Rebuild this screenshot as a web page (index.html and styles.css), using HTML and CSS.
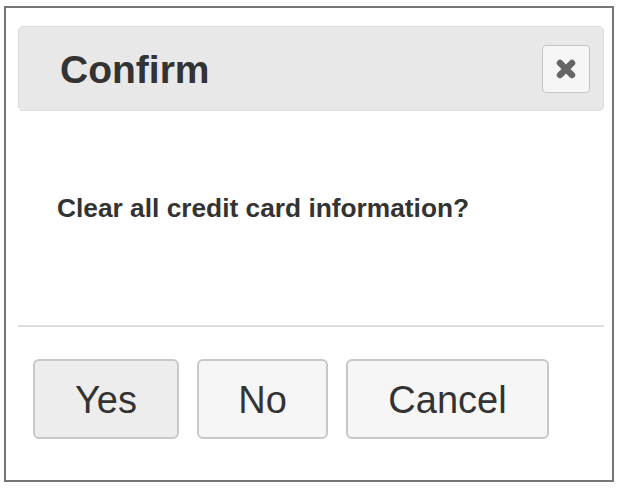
FILE: index.html
```html
<!DOCTYPE html>
<html>
<head>
<meta charset="utf-8">
<link rel="stylesheet" href="styles.css">
</head>
<body>
<div class="dialog">
  <div class="titlebar">
    <span class="title">Confirm</span>
    <button class="close" aria-label="Close">
      <svg width="24" height="22" viewBox="0 0 24 22"><path d="M6 5 L18 17 M18 5 L6 17" stroke="#666" stroke-width="6.5" stroke-linecap="round" fill="none"/></svg>
    </button>
  </div>
  <div class="content">
    <p class="message">Clear all credit card information?</p>
  </div>
  <div class="buttons">
    <button class="btn btn-yes btn-active">Yes</button>
    <button class="btn btn-no">No</button>
    <button class="btn btn-cancel">Cancel</button>
  </div>
</div>
</body>
</html>
```
FILE: styles.css
```css
html, body {
  margin: 0;
  padding: 0;
  background: #fff;
}
body {
  padding: 6px 4px;
  font-family: "Liberation Sans", Arial, sans-serif;
  color: #333;
}
.dialog {
  box-sizing: border-box;
  width: 610px;
  height: 476px;
  border: 2px solid #777;
  background: #fff;
}
.titlebar {
  box-sizing: border-box;
  margin: 18px 8px 0 12px;
  height: 85px;
  background: #e8e8e8;
  border: 1px solid #dcdcdc;
  border-radius: 5px;
  display: flex;
  align-items: center;
  justify-content: space-between;
  padding: 0 13px 0 41px;
}
.title {
  font-size: 39px;
  font-weight: bold;
  color: #333;
  padding-top: 2px;
}
.close {
  box-sizing: border-box;
  width: 48px;
  height: 48px;
  border: 1px solid #c5c5c5;
  border-radius: 4px;
  background: #f6f6f6;
  padding: 0;
  display: flex;
  align-items: center;
  justify-content: center;
}
.content {
  box-sizing: border-box;
  margin: 0 8px 0 12px;
  height: 216px;
  padding: 82px 0 0 39px;
  border-bottom: 2px solid #ddd;
}
.message {
  margin: 0;
  font-size: 26.3px;
  line-height: 30px;
  font-weight: bold;
  color: #333;
}
.buttons {
  display: flex;
  gap: 18px;
  padding: 32px 0 0 27px;
}
.btn {
  box-sizing: border-box;
  height: 80px;
  padding: 3px 0 0;
  font-family: "Liberation Sans", Arial, sans-serif;
  font-size: 38px;
  color: #333;
  background: #f6f6f6;
  border: 2px solid #c8c8c8;
  border-radius: 6px;
  text-align: center;
}
.btn-yes { width: 146px; }
.btn-no { width: 131px; }
.btn-cancel { width: 203px; }
.btn-active {
  background: #ededed;
}
```
